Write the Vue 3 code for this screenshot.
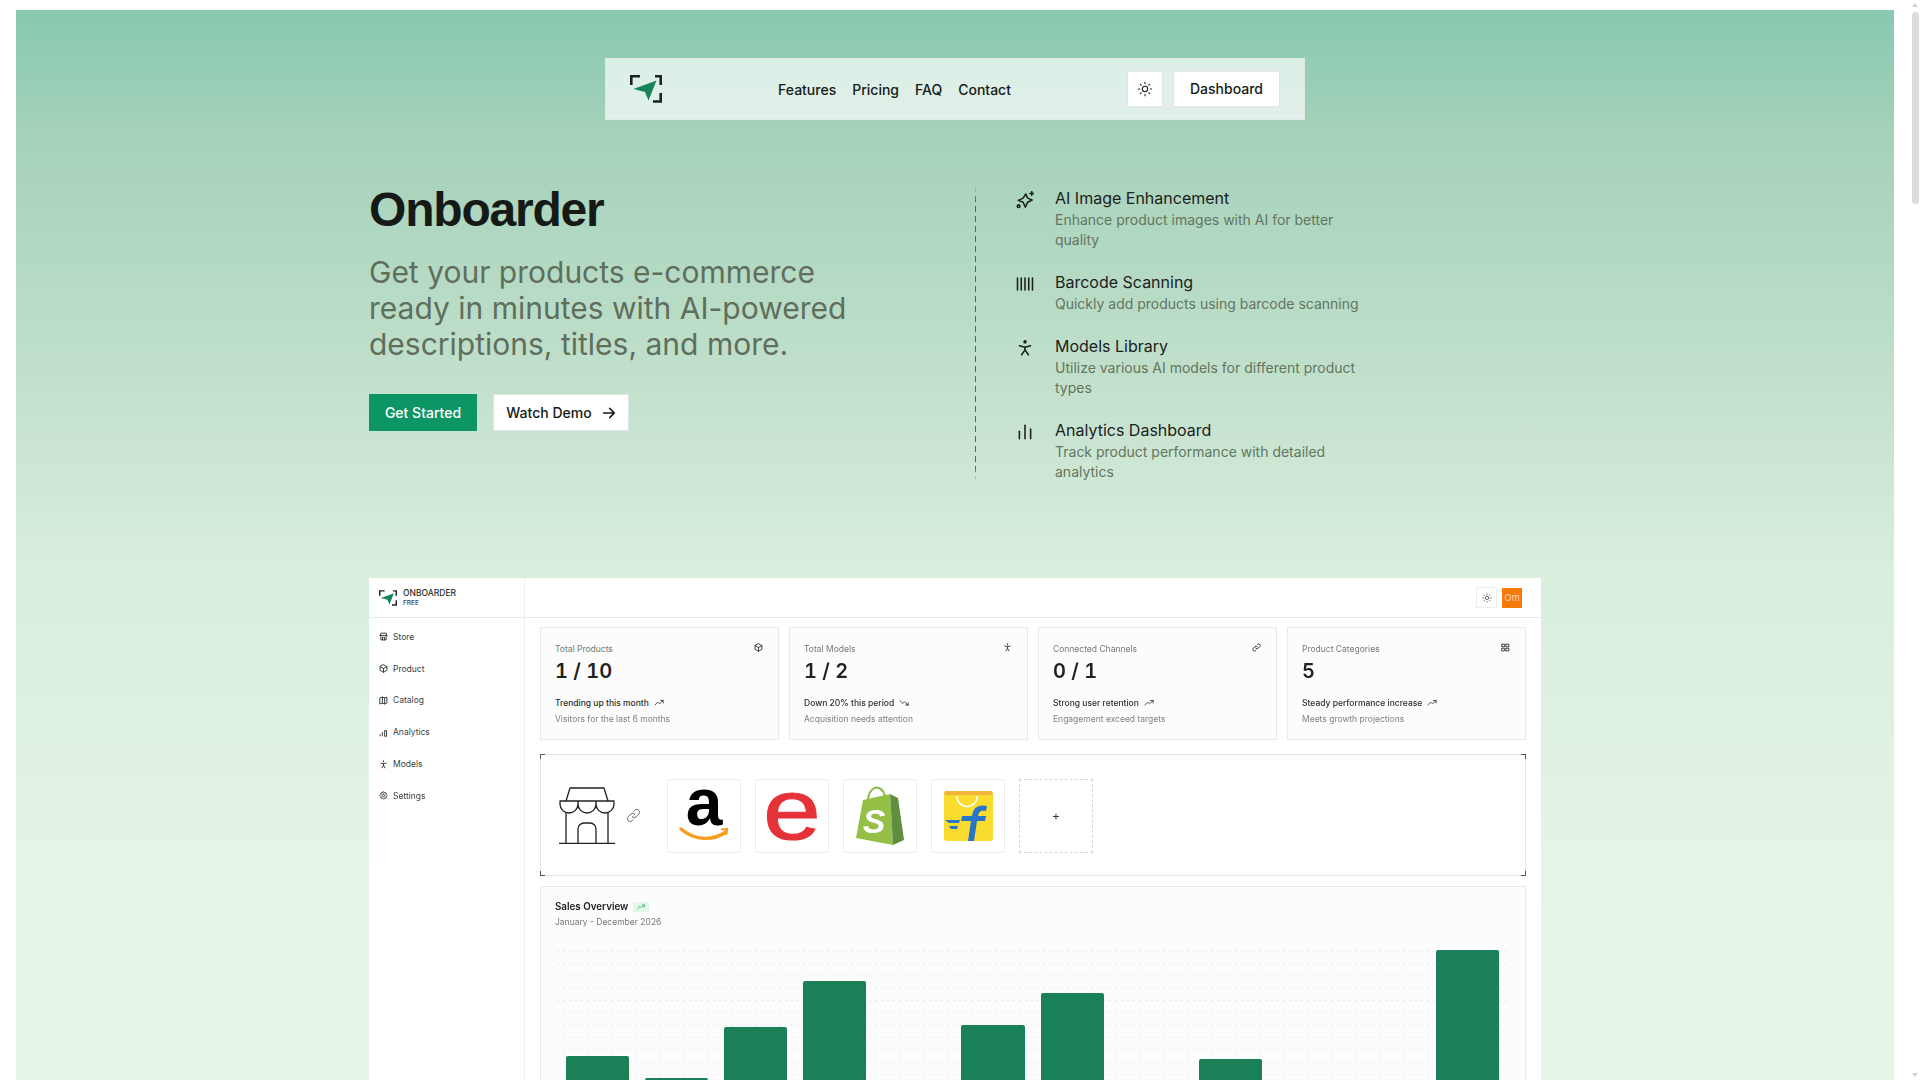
<template>
  <div class="page">
    <div class="hero">
      <!-- Navigering -->
      <nav class="nav">
        <svg class="nav-logo" viewBox="0 0 32 28">
          <path d="M1.300 10V1.300H10M25 1.300h5.700V10M30.700 18v8.500H23" fill="none" stroke="#1d241f" stroke-width="2.600" />
          <path d="M26.500 5.500 3.500 14l11.500 3 3.500 8.500z" fill="#17835a" />
        </svg>
        <div class="nav-links">
          <a v-for="link in navLinks" :key="link">{{ link }}</a>
        </div>
        <div class="nav-actions">
          <button class="btn-icon">
            <svg viewBox="0 0 24 24" width="16" height="16" fill="none" stroke="#1c211d" stroke-width="1.600" stroke-linecap="round">
              <circle cx="12" cy="12" r="4" />
              <path d="M12 2v2M12 20v2M4.900 4.900l1.400 1.400M17.700 17.700l1.400 1.400M2 12h2M20 12h2M6.300 17.700l-1.400 1.400M19.100 4.900l-1.400 1.400" />
            </svg>
          </button>
          <button class="btn-light">Dashboard</button>
        </div>
      </nav>

      <!-- Hero -->
      <section class="intro">
        <div class="intro-left">
          <h1>Onboarder</h1>
          <p class="lead">Get your products e-commerce ready in minutes with AI-powered descriptions, titles, and more.</p>
          <div class="cta">
            <button class="btn-primary">Get Started</button>
            <button class="btn-demo">
              Watch Demo
              <svg viewBox="0 0 24 24" width="16" height="16" fill="none" stroke="#151a16" stroke-width="2.400" stroke-linecap="round" stroke-linejoin="round">
                <path d="M4 12h16M13 5l7 7-7 7" />
              </svg>
            </button>
          </div>
        </div>
        <div class="divider"></div>
        <ul class="features">
          <li v-for="f in features" :key="f.title">
            <svg class="feature-icon" viewBox="0 0 24 24" fill="none" stroke="#1c211d" stroke-width="2.100" stroke-linecap="round" stroke-linejoin="round">
              <path v-for="d in f.icon" :key="d" :d="d" />
            </svg>
            <div>
              <h3>{{ f.title }}</h3>
              <p>{{ f.text }}</p>
            </div>
          </li>
        </ul>
      </section>

      <!-- Skärmbild av dashboarden -->
      <div class="shot">
        <aside class="side">
          <div class="side-brand">
            <svg viewBox="0 0 32 28" width="18" height="16">
              <path d="M1.300 10V1.300H10M25 1.300h5.700V10M30.700 18v8.500H23" fill="none" stroke="#1d241f" stroke-width="2.600" />
              <path d="M26.500 5.500 3.500 14l11.500 3 3.500 8.500z" fill="#17835a" />
            </svg>
            <div>
              <div class="brand-name">ONBOARDER</div>
              <div class="brand-plan">FREE</div>
            </div>
          </div>
          <div class="side-menu">
            <div v-for="item in sideItems" :key="item.label" class="side-item">
              <svg viewBox="0 0 24 24" width="9" height="9" fill="none" stroke="#2a2f2b" stroke-width="2.400" stroke-linecap="round" stroke-linejoin="round">
                <path v-for="d in item.icon" :key="d" :d="d" />
              </svg>
              {{ item.label }}
            </div>
          </div>
        </aside>
        <div class="main">
          <div class="topbar">
            <span class="top-sun">
              <svg viewBox="0 0 24 24" width="10" height="10" fill="none" stroke="#444" stroke-width="1.800" stroke-linecap="round">
                <circle cx="12" cy="12" r="4" />
                <path d="M12 2v2M12 20v2M4.900 4.900l1.400 1.400M17.700 17.700l1.400 1.400M2 12h2M20 12h2M6.300 17.700l-1.400 1.400M19.100 4.900l-1.400 1.400" />
              </svg>
            </span>
            <span class="avatar">Om</span>
          </div>
          <div class="content">
            <div class="stats">
              <div v-for="s in stats" :key="s.label" class="stat">
                <div class="stat-head">
                  <span>{{ s.label }}</span>
                  <svg viewBox="0 0 24 24" width="9" height="9" fill="none" stroke="#2a2f2b" stroke-width="2.400" stroke-linecap="round" stroke-linejoin="round">
                    <path v-for="d in s.icon" :key="d" :d="d" />
                  </svg>
                </div>
                <div class="stat-value">{{ s.value }}</div>
                <div class="stat-trend">
                  {{ s.trend }}
                  <svg viewBox="0 0 24 24" width="10" height="10" fill="none" stroke="#2a2f2b" stroke-width="2" stroke-linecap="round" stroke-linejoin="round">
                    <path :d="s.down ? 'M2 6l7 7 4-4 9 8M16 17h6v-6' : 'M2 17l7-7 4 4 9-8M16 6h6v6'" />
                  </svg>
                </div>
                <div class="stat-note">{{ s.note }}</div>
              </div>
            </div>

            <div class="channels">
              <i class="tick tl"></i><i class="tick tr"></i><i class="tick bl"></i><i class="tick br"></i>
              <svg class="store" viewBox="0 0 56 57" fill="none" stroke="#222" stroke-width="1.300" stroke-linejoin="round">
                <path d="M7 14 11 1h34l4 13" />
                <path d="M1 14h54v3a9 9 0 0 1-18 0 9 9 0 0 1-18 0 9 9 0 0 1-18 0z" />
                <path d="M19 14v3M37 14v3" />
                <path d="M7 25v31M49 25v31M0 56.500h56" />
                <path d="M19 56V42a6 6 0 0 1 6-6h6a6 6 0 0 1 6 6v14" />
              </svg>
              <svg class="link" viewBox="0 0 24 24" fill="none" stroke="#555" stroke-width="1.400" stroke-linecap="round">
                <path d="M10 14a4.500 4.500 0 0 0 6.400 0l4-4A4.500 4.500 0 0 0 14 3.600l-1.500 1.500" />
                <path d="M14 10a4.500 4.500 0 0 0-6.400 0l-4 4a4.500 4.500 0 0 0 6.400 6.400l1.500-1.500" />
              </svg>
              <div class="tile">
                <svg viewBox="0 0 74 74" width="74" height="74">
                  <text x="37" y="46" text-anchor="middle" class="amazon-a">a</text>
                  <path d="M14 50c14 12 32 12 45 3" fill="none" stroke="#f79c1c" stroke-width="3.400" stroke-linecap="round" />
                  <path d="M54 50.500l6-.5-1 6" fill="none" stroke="#f79c1c" stroke-width="2.200" />
                </svg>
              </div>
              <div class="tile">
                <svg viewBox="0 0 74 74" width="74" height="74">
                  <text transform="translate(37 60) scale(1.2 1)" text-anchor="middle" class="ebay-e">e</text>
                </svg>
              </div>
              <div class="tile">
                <svg viewBox="0 0 74 74" width="74" height="74">
                  <path d="M25 20c1-9 7-13 11-11 5 2 6 6 6 11" fill="none" stroke="#8cb848" stroke-width="2" />
                  <path d="M20 21 47 15 50 66 13 59z" fill="#95bf47" />
                  <path d="M47 15l8 4 6 42-11 5z" fill="#5e8e3e" />
                  <text x="31" y="54" text-anchor="middle" class="shopify-s">S</text>
                </svg>
              </div>
              <div class="tile">
                <svg viewBox="0 0 74 74" width="74" height="74">
                  <rect x="13" y="12" width="49" height="50" rx="3" fill="#f9dc2d" />
                  <path d="M14 12h47l1 4H13z" fill="#f2b53b" />
                  <path d="M26 17c0 14 20 14 20 0" fill="none" stroke="#fff" stroke-width="1.600" />
                  <path d="M37 62l3-20H30l1-5h10c1-9 7-12 15-10l-1 5c-5-1-7 0-8 5h8l-1 5h-8l-3 20z" fill="#2874c8" />
                  <path d="M14 41h15l-1 3H18zM18 47h9l-1 3h-6z" fill="#2874c8" />
                </svg>
              </div>
              <div class="tile tile-add">+</div>
            </div>

            <div class="sales">
              <div class="sales-title">
                Sales Overview
                <span class="sales-badge">
                  <svg viewBox="0 0 24 24" width="8" height="8" fill="none" stroke="#2fa56f" stroke-width="2.400" stroke-linecap="round" stroke-linejoin="round">
                    <path d="M2 17l7-7 4 4 9-8M16 6h6v6" />
                  </svg>
                </span>
              </div>
              <div class="sales-sub">January - December 2026</div>
              <div class="chart">
                <div v-for="(h, i) in bars" :key="i" class="bar" :style="{ height: h + 'px' }"></div>
              </div>
            </div>
          </div>
        </div>
      </div>
    </div>

    <!-- Rullningslist -->
    <div class="scrollbar">
      <span class="arrow up"></span>
      <span class="thumb"></span>
      <span class="arrow down"></span>
    </div>
  </div>
</template>

<script setup>
const navLinks = ['Features', 'Pricing', 'FAQ', 'Contact']

const features = [
  {
    title: 'AI Image Enhancement',
    text: 'Enhance product images with AI for better quality',
    icon: [
      'M13 4 15.500 9.500 21.500 12 15.500 15 12.500 21.500 9.500 15 3 12.500 9.500 9.500z',
      'M21 .8v5M18.500 3.300h5',
      'M3.500 18.500a1.800 1.800 0 1 0 .01 0'
    ]
  },
  {
    title: 'Barcode Scanning',
    text: 'Quickly add products using barcode scanning',
    icon: ['M2 4v16', 'M7 4v16', 'M12 4v16', 'M17 4v16', 'M22 4v16']
  },
  {
    title: 'Models Library',
    text: 'Utilize various AI models for different product types',
    icon: ['M12 2.500a1.300 1.300 0 1 0 .01 0', 'M4.500 9l7.500 2 7.500-2', 'M12 11v3.500L7.500 21', 'M12 14.500l4.500 6.500']
  },
  {
    title: 'Analytics Dashboard',
    text: 'Track product performance with detailed analytics',
    icon: ['M4.500 21v-10', 'M12 21V3', 'M19.500 21V8']
  }
]

const sideItems = [
  { label: 'Store', icon: ['M3 9l2-6h14l2 6', 'M3 9h18', 'M5 9v12h14V9', 'M9 21v-7h6v7'] },
  { label: 'Product', icon: ['M12 2l9 5v10l-9 5-9-5V7z', 'M3 7l9 5 9-5', 'M12 12v10'] },
  { label: 'Catalog', icon: ['M3 5l6-2 6 2 6-2v16l-6 2-6-2-6 2z', 'M9 3v16', 'M15 5v16'] },
  { label: 'Analytics', icon: ['M3 21v-4', 'M9 21V12', 'M15 21V7h5v14z'] },
  { label: 'Models', icon: ['M12 2v3', 'M5 8l7 2 7-2', 'M12 10v4l-4 7', 'M12 14l4 7'] },
  { label: 'Settings', icon: ['M12 8.500a3.500 3.500 0 1 0 .01 0', 'M12 2l3 3h4v4l3 3-3 3v4h-4l-3 3-3-3H5v-4l-3-3 3-3V5h4z'] }
]

const stats = [
  {
    label: 'Total Products',
    value: '1 / 10',
    trend: 'Trending up this month',
    note: 'Visitors for the last 6 months',
    icon: ['M12 2l9 5v10l-9 5-9-5V7z', 'M3 7l9 5 9-5', 'M12 12v10']
  },
  {
    label: 'Total Models',
    value: '1 / 2',
    trend: 'Down 20% this period',
    note: 'Acquisition needs attention',
    down: true,
    icon: ['M12 2v3', 'M5 8l7 2 7-2', 'M12 10v4l-4 7', 'M12 14l4 7']
  },
  {
    label: 'Connected Channels',
    value: '0 / 1',
    trend: 'Strong user retention',
    note: 'Engagement exceed targets',
    icon: ['M10 14a4.500 4.500 0 0 0 6.400 0l4-4A4.500 4.500 0 0 0 14 3.600', 'M14 10a4.500 4.500 0 0 0-6.400 0l-4 4a4.500 4.500 0 0 0 6.400 6.400']
  },
  {
    label: 'Product Categories',
    value: '5',
    trend: 'Steady performance increase',
    note: 'Meets growth projections',
    icon: ['M3 3h7v7H3z', 'M14 3h7v7h-7z', 'M3 14h7v7H3z', 'M14 14h7v7h-7z']
  }
]

// Höjder i px mot en baslinje nedanför vecket
const baseline = 1210
const bars = [1056, 1078, 1027, 981, 1140, 1025, 993, 1150, 1059, 1160, 1120, 950].map(top => baseline - top)
</script>

<style>
html,
body {
  background: #fff;
  overflow: hidden;
}
</style>

<style scoped>
.page {
  height: 1080px;
  overflow: hidden;
  box-sizing: border-box;
  padding: 10px 26px 0 16px;
  font-family: Inter, "Liberation Sans", sans-serif;
  color: #151a16;
}

.hero {
  height: 1070px;
  overflow: hidden;
  padding-top: 48px;
  box-sizing: border-box;
  background: linear-gradient(180deg, #88c9b0 0, #a5d1ba 125px, #bfdfca 350px, #d9eedd 560px, #e6f5e8 900px);
}

button {
  font-family: inherit;
  cursor: pointer;
}

.nav {
  width: 700px;
  height: 62px;
  box-sizing: border-box;
  margin: 0 auto;
  padding: 0 24px;
  display: flex;
  align-items: center;
  justify-content: space-between;
  background: rgba(255, 255, 255, 0.68);
  border: 1px solid #e2e7e4;
}

.nav-logo {
  width: 32px;
  height: 28px;
}

.nav-links {
  display: flex;
  gap: 16px;
  font-size: 14px;
  font-weight: 450;
  padding-top: 1px;
}

.nav-actions {
  display: flex;
  gap: 10px;
}

.btn-icon {
  width: 36px;
  height: 36px;
  padding: 0;
  display: flex;
  align-items: center;
  justify-content: center;
  background: #fff;
  border: 1px solid #e2e5e3;
}

.btn-light {
  width: 107px;
  height: 36px;
  padding: 0 0 2px;
  background: #fff;
  border: 1px solid #e2e5e3;
  font-size: 14px;
  font-weight: 450;
  color: #151a16;
}

.intro {
  width: 1172px;
  height: 458px;
  margin: 0 auto;
  padding-top: 66px;
  display: flex;
  box-sizing: border-box;
}

.intro-left {
  width: 606px;
  flex: none;
}

h1 {
  margin: 0;
  font-family: "Liberation Sans", Arial, sans-serif;
  font-size: 48px;
  line-height: 48px;
  font-weight: 700;
  letter-spacing: -1.200px;
  color: #151a16;
}

.lead {
  margin: 20px 0 0;
  width: 500px;
  font-size: 30px;
  line-height: 36px;
  color: #5f6f5c;
}

.cta {
  margin-top: 32px;
  display: flex;
  gap: 16px;
}

.btn-primary {
  width: 108px;
  height: 37px;
  padding: 0;
  background: #0e9565;
  border: none;
  color: #fff;
  font-size: 14px;
  font-weight: 450;
}

.btn-demo {
  width: 136px;
  height: 37px;
  padding: 0 2px 0 3px;
  display: flex;
  align-items: center;
  justify-content: center;
  gap: 9px;
  background: #fff;
  border: 1px solid #e2e5e3;
  font-size: 14px;
  font-weight: 450;
  color: #151a16;
}

.divider {
  flex: none;
  width: 1px;
  height: 296px;
  background: repeating-linear-gradient(180deg, #4e6b58 0, #4e6b58 6px, transparent 6px, transparent 10px);
  -webkit-mask-image: linear-gradient(180deg, transparent, #000 5%, #000 95%, transparent);
  mask-image: linear-gradient(180deg, transparent, #000 5%, #000 95%, transparent);
}

.features {
  list-style: none;
  margin: 0;
  padding: 0 0 0 40px;
  width: 360px;
  display: flex;
  flex-direction: column;
  gap: 20px;
}

.features li {
  display: flex;
  gap: 21px;
}

.feature-icon {
  flex: none;
  width: 18px;
  height: 18px;
  margin-top: 5px;
}

.features h3 {
  margin: 0;
  font-size: 16px;
  line-height: 24px;
  font-weight: 400;
  color: #1c211d;
}

.features p {
  margin: 0;
  font-size: 14px;
  line-height: 20px;
  color: #64755f;
}

.shot {
  width: 1172px;
  height: 600px;
  margin: 0 auto;
  display: flex;
  background: #fff;
  filter: blur(0.35px);
}

.side {
  width: 155px;
  flex: none;
  border-right: 1px solid #eef0ef;
}

.side-brand {
  height: 40px;
  box-sizing: border-box;
  border-bottom: 1px solid #e8eae9;
  display: flex;
  align-items: center;
  gap: 6px;
  padding-left: 10px;
}

.brand-name {
  font-size: 8.500px;
  line-height: 10px;
  font-weight: 500;
  color: #2a2f2b;
}

.brand-plan {
  font-size: 6.500px;
  line-height: 10px;
  font-weight: 500;
  color: #444;
}

.side-menu {
  padding: 7px 0 0 10px;
  display: flex;
  flex-direction: column;
}

.side-item {
  height: 31.800px;
  display: flex;
  align-items: center;
  gap: 5px;
  font-size: 8.500px;
  color: #3a3f3b;
  margin-top: -4px;
  margin-bottom: 4px;
}

.main {
  flex: 1;
  min-width: 0;
}

.topbar {
  height: 40px;
  box-sizing: border-box;
  border-bottom: 1px solid #e8eae9;
  display: flex;
  align-items: center;
  justify-content: flex-end;
  gap: 5px;
  padding-right: 19px;
}

.top-sun {
  width: 21px;
  height: 21px;
  box-sizing: border-box;
  border: 1px solid #eceeed;
  display: flex;
  align-items: center;
  justify-content: center;
}

.avatar {
  width: 20px;
  height: 20px;
  background: #f57a0c;
  color: #fdd9b8;
  font-size: 9.500px;
  line-height: 20px;
  text-align: center;
}

.content {
  padding: 9px 15px 0 15px;
}

.stats {
  display: grid;
  grid-template-columns: repeat(4, 1fr);
  gap: 10px;
}

.stat {
  height: 113px;
  box-sizing: border-box;
  padding: 15px 15px 0 14px;
  background: #fcfcfc;
  border: 1px solid #e9ebea;
}

.stat-head {
  display: flex;
  justify-content: space-between;
  font-size: 8.500px;
  line-height: 12px;
  color: #727a72;
}

.stat-value {
  margin-top: 4px;
  font-size: 20px;
  line-height: 24px;
  font-weight: 600;
  font-variant-numeric: tabular-nums;
  color: #1f2320;
}

.stat-trend {
  margin-top: 14px;
  display: flex;
  align-items: center;
  gap: 5px;
  font-size: 8.500px;
  line-height: 12px;
  font-weight: 500;
  color: #2a2f2b;
}

.stat-note {
  margin-top: 4px;
  font-size: 8.500px;
  line-height: 12px;
  color: #7c847c;
}

.channels {
  position: relative;
  margin-top: 14px;
  height: 122px;
  box-sizing: border-box;
  border: 1px solid #e3e5e4;
  padding: 24px 0 0 18px;
  display: flex;
  gap: 14px;
}

.tick {
  position: absolute;
  width: 4px;
  height: 4px;
  border: 0 solid #555;
}

.tl {
  left: -1px;
  top: -1px;
  border-width: 1px 0 0 1px;
}

.tr {
  right: -1px;
  top: -1px;
  border-width: 1px 1px 0 0;
}

.bl {
  left: -1px;
  bottom: -1px;
  border-width: 0 0 1px 1px;
}

.br {
  right: -1px;
  bottom: -1px;
  border-width: 0 1px 1px 0;
}

.store {
  width: 56px;
  height: 57px;
  margin-top: 8px;
  margin-right: -3px;
}

.link {
  width: 15px;
  height: 15px;
  margin-top: 29px;
  margin-right: 12px;
}

.tile {
  width: 74px;
  height: 74px;
  box-sizing: border-box;
  border: 1px solid #eceeed;
  display: flex;
  align-items: center;
  justify-content: center;
}

.tile svg {
  flex: none;
  overflow: visible;
}

.tile-add {
  border: 1px dashed #d5d7d6;
  font-size: 12px;
  color: #333;
  padding-bottom: 2px;
}

.amazon-a {
  font-family: "Liberation Sans", sans-serif;
  font-size: 66px;
  font-weight: 700;
  fill: #000;
}

.ebay-e {
  font-family: "Liberation Sans", sans-serif;
  font-size: 86px;
  font-weight: 400;
  fill: #e53238;
  stroke: #e53238;
  stroke-width: 1.200px;
}

.shopify-s {
  font-family: "Liberation Sans", sans-serif;
  font-size: 34px;
  font-weight: 700;
  font-style: italic;
  fill: #fff;
}

.sales {
  margin-top: 10px;
  height: 300px;
  box-sizing: border-box;
  padding: 14px 14px 0;
  background: #fcfcfc;
  border: 1px solid #e9ebea;
}

.sales-title {
  display: flex;
  align-items: center;
  gap: 5px;
  font-size: 9.800px;
  line-height: 12px;
  font-weight: 600;
  color: #222;
}

.sales-badge {
  width: 16px;
  height: 10px;
  background: #e2f6ea;
  display: flex;
  align-items: center;
  justify-content: center;
}

.sales-sub {
  margin-top: 3px;
  font-size: 8.500px;
  line-height: 12px;
  color: #727a72;
}

.chart {
  margin-top: 22px;
  height: 260px;
  padding: 0 11px;
  display: flex;
  align-items: flex-end;
  gap: 16px;
  background-image: radial-gradient(circle, #e4e8e4 0.7px, transparent 1px);
  background-size: 6px 12.330px;
  background-position: 0 -5px;
}

.bar {
  width: 63.100px;
  flex: none;
  background: #1a8058;
  border-radius: 2px 2px 0 0;
}

.scrollbar {
  position: fixed;
  right: 0;
  top: 0;
  bottom: 0;
  width: 16px;
}

.thumb {
  position: absolute;
  left: 8px;
  top: 12px;
  width: 7px;
  height: 192px;
  border-radius: 4px;
  background: #dcdcdc;
}

.arrow {
  position: absolute;
  left: 8px;
  width: 0;
  height: 0;
  border-left: 3.500px solid transparent;
  border-right: 3.500px solid transparent;
}

.up {
  top: 3px;
  border-bottom: 4px solid #d0d0d0;
}

.down {
  bottom: 3px;
  border-top: 4px solid #d0d0d0;
}
</style>
